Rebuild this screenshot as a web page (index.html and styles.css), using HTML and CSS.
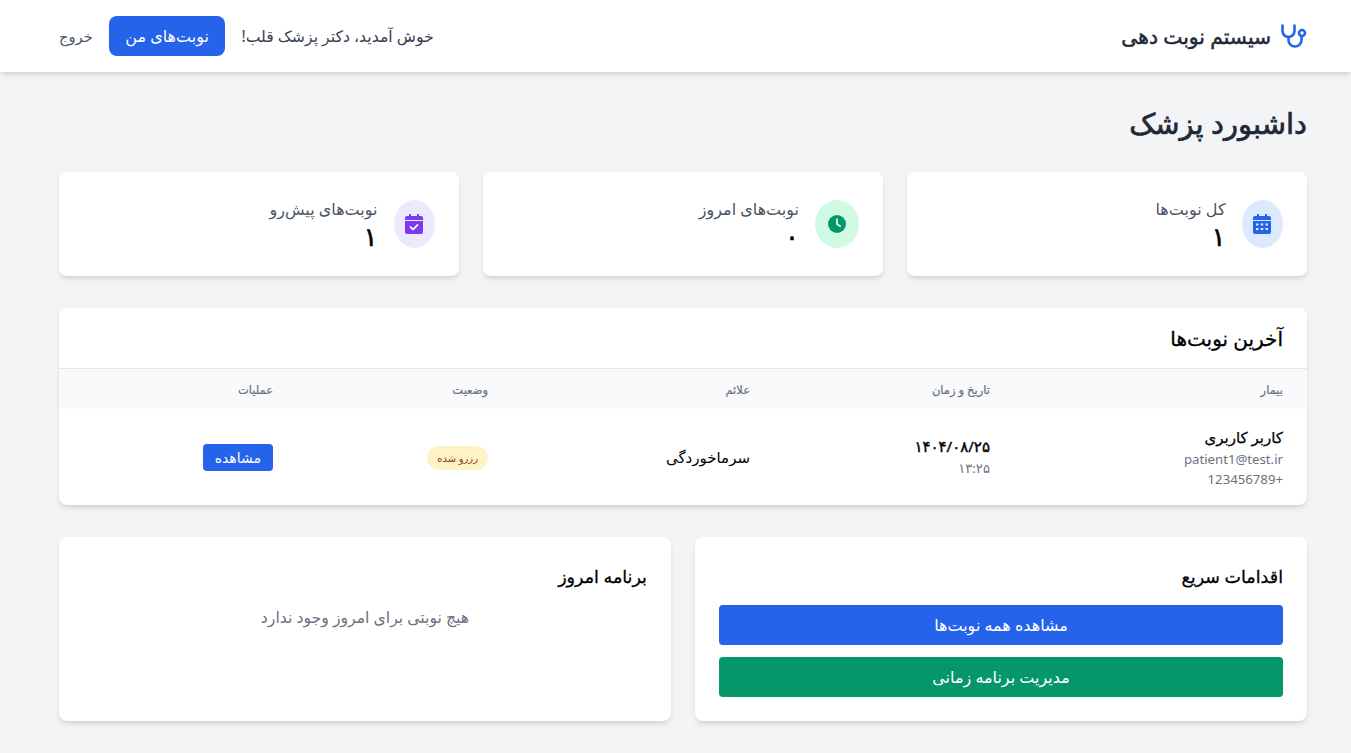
FILE: index.html
```html
<!DOCTYPE html>
<html lang="fa" dir="rtl">
<head>
    <meta charset="UTF-8">
    <meta name="viewport" content="width=device-width, initial-scale=1.0">
    <title>داشبورد پزشک</title>
    <link rel="stylesheet" href="styles.css">
</head>
<body>
    <nav class="navbar">
        <div class="brand">
            <svg class="brand-icon" viewBox="0 0 26 24" fill="none" stroke="#2563eb" stroke-width="2.600" stroke-linecap="round" stroke-linejoin="round">
                <path d="M1.500 1.500V7a6 6 0 0 0 12 0V1.500"/>
                <path d="M7.500 13v3a6.500 6.500 0 0 0 13 0v-4"/>
                <circle cx="21" cy="9" r="3"/>
            </svg>
            <span>سیستم نوبت دهی</span>
        </div>
        <div class="nav-links">
            <span class="welcome">خوش آمدید، دکتر پزشک قلب!</span>
            <a class="nav-btn" href="#">نوبت‌های من</a>
            <a class="logout" href="#">خروج</a>
        </div>
    </nav>

    <main class="container">
        <h1 class="page-title">داشبورد پزشک</h1>

        <div class="stats">
            <div class="card stat">
                <div class="stat-icon blue">
                    <svg viewBox="0 0 18 20" fill="#2563eb">
                        <path d="M4 0h2v2h6V0h2v2h2a2 2 0 0 1 2 2v2H0V4a2 2 0 0 1 2-2h2z"/>
                        <path fill-rule="evenodd" d="M0 7h18v11a2 2 0 0 1-2 2H2a2 2 0 0 1-2-2zM3 9.500v2h2.500v-2zM7.750 9.500v2h2.500v-2zM12.500 9.500v2H15v-2zM3 14v2h2.500v-2zM7.750 14v2h2.500v-2zM12.500 14v2H15v-2z"/>
                    </svg>
                </div>
                <div class="stat-text">
                    <div class="stat-label">کل نوبت‌ها</div>
                    <div class="stat-value">۱</div>
                </div>
            </div>
            <div class="card stat">
                <div class="stat-icon green">
                    <svg viewBox="0 0 20 20">
                        <circle cx="10" cy="10" r="10" fill="#059669"/>
                        <path d="M10 4.500V10l3.500 2.500" fill="none" stroke="#d1fae5" stroke-width="2" stroke-linecap="round" stroke-linejoin="round"/>
                    </svg>
                </div>
                <div class="stat-text">
                    <div class="stat-label">نوبت‌های امروز</div>
                    <div class="stat-value">۰</div>
                </div>
            </div>
            <div class="card stat">
                <div class="stat-icon purple">
                    <svg viewBox="0 0 18 20" fill="#7c3aed">
                        <path d="M4 0h2v2h6V0h2v2h2a2 2 0 0 1 2 2v2H0V4a2 2 0 0 1 2-2h2z"/>
                        <path d="M0 7h18v11a2 2 0 0 1-2 2H2a2 2 0 0 1-2-2z"/>
                        <path d="M5.500 13l2.500 2.500 4.500-4.500" fill="none" stroke="#ede9fe" stroke-width="1.800" stroke-linecap="round" stroke-linejoin="round"/>
                    </svg>
                </div>
                <div class="stat-text">
                    <div class="stat-label">نوبت‌های پیش‌رو</div>
                    <div class="stat-value">۱</div>
                </div>
            </div>
        </div>

        <section class="card recent">
            <h2 class="recent-title">آخرین نوبت‌ها</h2>
            <table class="table">
                <colgroup>
                    <col class="col-patient">
                    <col class="col-date">
                    <col class="col-symptom">
                    <col class="col-status">
                    <col>
                </colgroup>
                <thead>
                    <tr>
                        <th>بیمار</th>
                        <th>تاریخ و زمان</th>
                        <th>علائم</th>
                        <th>وضعیت</th>
                        <th>عملیات</th>
                    </tr>
                </thead>
                <tbody>
                    <tr>
                        <td>
                            <div class="patient-name">کاربر کاربری</div>
                            <div class="muted">patient1@test.ir</div>
                            <div class="muted">+123456789</div>
                        </td>
                        <td>
                            <div class="date">۱۴۰۴/۰۸/۲۵</div>
                            <div class="muted time">۱۳:۲۵</div>
                        </td>
                        <td class="symptom">سرماخوردگی</td>
                        <td><span class="badge">رزرو شده</span></td>
                        <td><a class="view-btn" href="#">مشاهده</a></td>
                    </tr>
                </tbody>
            </table>
        </section>

        <div class="bottom">
            <section class="card panel">
                <h3 class="panel-title">اقدامات سریع</h3>
                <a class="action blue-btn" href="#">مشاهده همه نوبت‌ها</a>
                <a class="action green-btn" href="#">مدیریت برنامه زمانی</a>
            </section>
            <section class="card panel">
                <h3 class="panel-title">برنامه امروز</h3>
                <p class="empty">هیچ نوبتی برای امروز وجود ندارد</p>
            </section>
        </div>
    </main>
</body>
</html>
```

FILE: styles.css
```css
*{
    margin: 0;
    padding: 0;
    box-sizing: border-box;
}
a{
    text-decoration: none;
}
h1,h2,h3{
    font-weight: 400;
}
body{
    background-color: #f3f4f6;
    color: #000;
    font-family: "Noto Sans", "DejaVu Sans", sans-serif;
    font-size: 16px;
}

/* the stroke thickens the regular cut, the bold one is too wide */
.navbar{
    height: 72px;
    background-color: #fff;
    box-shadow: 0 4px 6px -1px rgba(0,0,0,.1), 0 2px 4px -2px rgba(0,0,0,.1);
    padding: 0 44px 0 59px;
    display: flex;
    align-items: center;
    justify-content: space-between;
}
.brand{
    display: flex;
    align-items: center;
    gap: 10px;
    font-size: 20.300px;
    -webkit-text-stroke: .5px;
    color: #1f2937;
}
.brand-icon{
    width: 26px;
    height: 24px;
    flex: none;
}
.nav-links{
    display: flex;
    align-items: center;
    gap: 16px;
}
.welcome{
    color: #374151;
    font-size: 15.700px;
}
.nav-btn{
    background-color: #2563eb;
    color: #fff;
    height: 40px;
    line-height: 40px;
    padding: 0 16.500px;
    border-radius: 8px;
}
.logout{
    color: #4b5563;
    font-size: 14.700px;
}

.container{
    width: 1280px;
    margin: 0 28px 0 0;
    padding: 32px 16px;
}
.page-title{
    font-size: 29px;
    line-height: 38px;
    -webkit-text-stroke: .7px;
    color: #1f2937;
    margin-bottom: 30px;
}

.card{
    background-color: #fff;
    border-radius: 8px;
    box-shadow: 0 4px 6px -1px rgba(0,0,0,.1), 0 2px 4px -2px rgba(0,0,0,.1);
}

.stats{
    display: grid;
    grid-template-columns: repeat(3, 1fr);
    gap: 24px;
    margin-bottom: 32px;
}
.stat{
    height: 104px;
    padding: 28px 24px;
    display: flex;
    align-items: center;
    gap: 16px;
}
.stat-icon{
    width: 41.500px;
    height: 48px;
    border-radius: 50%;
    display: flex;
    align-items: center;
    justify-content: center;
}
.stat-icon svg{
    width: 18px;
    height: 20px;
}
.blue{
    background-color: #dbeafe;
}
.green{
    background-color: #d1fae5;
    width: 44px;
}
.purple{
    background-color: #ede9fe;
}
.stat-text{
    padding-top: 1px;
}
.stat-label{
    line-height: 22px;
    color: #4b5563;
}
.stat-value{
    font-size: 26px;
    line-height: 32px;
    -webkit-text-stroke: .6px;
}

.recent{
    margin-bottom: 32px;
    overflow: hidden;
}
.recent-title{
    height: 61px;
    line-height: 62px;
    padding: 0 24px;
    font-size: 20px;
    -webkit-text-stroke: .3px;
    border-bottom: 1px solid #e5e7eb;
}
.table{
    width: 100%;
    border-collapse: collapse;
    table-layout: fixed;
}
.col-patient{
    width: 293px;
}
.col-date{
    width: 240px;
}
.col-symptom{
    width: 262px;
}
.col-status{
    width: 215px;
}
.table th{
    height: 40px;
    padding: 0 24px;
    background-color: #f9fafb;
    color: #6b7280;
    font-size: 11.500px;
    font-weight: 400;
    -webkit-text-stroke: .2px;
    text-align: right;
}
.table td{
    height: 96px;
    padding: 0 24px;
    vertical-align: middle;
}
.patient-name{
    font-size: 15px;
    line-height: 24px;
    -webkit-text-stroke: .25px;
}
.date{
    font-size: 15px;
    line-height: 22px;
    -webkit-text-stroke: .4px;
}
.muted{
    color: #6b7280;
    font-size: 13.200px;
    line-height: 20px;
}
.time{
    line-height: 22px;
}
.symptom{
    font-size: 15px;
}
.badge{
    display: inline-block;
    height: 24px;
    line-height: 24px;
    padding: 0 10px;
    border-radius: 12px;
    background-color: #fef3c7;
    color: #92400e;
    font-size: 10px;
}
.view-btn{
    display: inline-block;
    height: 27px;
    line-height: 27px;
    padding: 0 12px;
    background-color: #2563eb;
    color: #fff;
    font-size: 14px;
    border-radius: 4px;
}

.bottom{
    display: grid;
    grid-template-columns: 1fr 1fr;
    gap: 24px;
}
.panel{
    height: 184px;
    padding: 24px;
}
.panel-title{
    font-size: 17.500px;
    line-height: 30px;
    -webkit-text-stroke: .3px;
    margin-bottom: 14px;
}
.action{
    display: block;
    height: 40px;
    line-height: 40px;
    text-align: center;
    color: #fff;
    border-radius: 4px;
    margin-bottom: 12px;
}
.blue-btn{
    background-color: #2563eb;
}
.green-btn{
    background-color: #059669;
}
.empty{
    text-align: center;
    color: #6b7280;
    font-size: 15.700px;
    line-height: 24px;
}
```
